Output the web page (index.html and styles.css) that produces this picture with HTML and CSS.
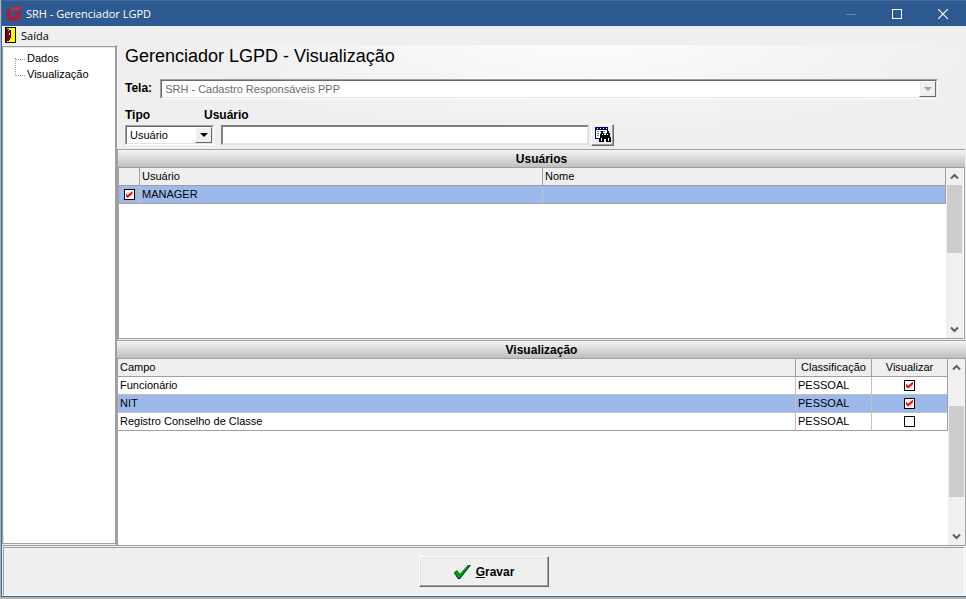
FILE: index.html
```
<!DOCTYPE html>
<html lang="pt-BR">
<head>
    <meta charset="UTF-8">
    <title>SRH - Gerenciador LGPD</title>
    <link rel="stylesheet" href="styles.css">
</head>
<body>
    <div class="window">
        <header class="titlebar">
            <svg class="logo" width="16" height="16" viewBox="0 0 16 16">
                <path d="M16 0 L13 4 H8 Q5 4 4 8 Q4 11 7 11 H10 L11 9 H7 L9 6 H16 L13 15 H5 Q0 15 0 9 Q1 1 8 1 Q13 1 16 0 Z" fill="#a3203f"/>
                <path d="M16 0 L13 4 H8 L3 5 Q5 1 8 1 Q13 1 16 0 Z" fill="#cc2b3a"/>
            </svg>
            <h1>SRH - Gerenciador LGPD</h1>
            <button class="win_btn" type="button" aria-label="Minimizar">
                <svg width="10" height="10"><path d="M0 5.500 H10" stroke="#6388b8"/></svg>
            </button>
            <button class="win_btn" type="button" aria-label="Maximizar">
                <svg width="10" height="10"><rect x="0.500" y="0.500" width="9" height="9" fill="none" stroke="#fff"/></svg>
            </button>
            <button class="win_btn" type="button" aria-label="Fechar">
                <svg width="10" height="10"><path d="M0 0 L10 10 M10 0 L0 10" stroke="#fff" stroke-width="1.200"/></svg>
            </button>
        </header>

        <nav class="menubar">
            <button class="menu_item" type="button">
                <svg width="11" height="16" viewBox="0 0 11 16" shape-rendering="crispEdges">
                    <rect width="11" height="16" fill="#000"/>
                    <rect x="1" y="1" width="9" height="14" fill="#ff0"/>
                    <path d="M1 1 H3 V2 H4 V3 H5 V11 H4 V13 H3 V14 H2 V15 H1 Z" fill="#800000"/>
                    <path d="M5 3 H6 V11 H5 V13 H4 V14 H3 V13 H4 V11 H5 Z" fill="#000"/>
                    <rect x="2" y="1" width="2" height="1" fill="#0ff"/>
                    <rect x="3" y="3" width="1" height="1" fill="#0ff"/>
                    <rect x="4" y="6" width="1" height="2" fill="#ff0"/>
                </svg>
                Saída
            </button>
        </nav>

        <div class="main">
            <aside class="sidebar">
                <ul class="tree">
                    <li><a href="#dados">Dados</a></li>
                    <li><a href="#visualizacao">Visualização</a></li>
                </ul>
            </aside>

            <main class="content">
                <form class="filter">
                    <h2>Gerenciador LGPD - Visualização</h2>
                    <div class="row">
                        <label class="label" for="tela">Tela:</label>
                        <div class="combo combo_tela">
                            <select id="tela" disabled>
                                <option>SRH - Cadastro Responsáveis PPP</option>
                            </select>
                            <span class="arrow"></span>
                        </div>
                    </div>
                    <div class="fields">
                        <label class="label" for="tipo">Tipo</label>
                        <label class="label label_usuario" for="usuario">Usuário</label>
                        <div class="combo">
                            <select id="tipo">
                                <option>Usuário</option>
                            </select>
                            <span class="arrow"></span>
                        </div>
                        <input class="text" id="usuario" type="text">
                        <button class="search" type="button" aria-label="Pesquisar">
                            <svg width="16" height="16" viewBox="0 0 16 16" shape-rendering="crispEdges">
                                <rect width="13" height="12" fill="#000080"/>
                                <rect x="1" y="3" width="11" height="8" fill="#fff"/>
                                <path d="M2 1.500 H12" stroke="#fff" stroke-dasharray="1 2"/>
                                <path d="M2 4.500 H11 M2 6.500 H11 M2 8.500 H11" stroke="#808080" stroke-dasharray="2 1"/>
                                <path d="M6 4 H8 V6 H9 V8 H11 V6 H12 V4 H14 V6 H15 V10 H16 V15 H11 V11 H9 V15 H4 V11 H5 V7 H6 Z" fill="#000"/>
                                <path d="M6 11 H7 V14 H6 Z M13 11 H14 V14 H13 Z M7 7 H8 V8 H7 Z M12 7 H13 V8 H12 Z" fill="#fff"/>
                            </svg>
                        </button>
                    </div>
                </form>

                <section class="panel panel_users">
                    <h3>Usuários</h3>
                    <div class="grid">
                        <div class="table_box">
                            <table>
                                <colgroup><col class="col_check"><col><col></colgroup>
                                <thead>
                                    <tr><th></th><th>Usuário</th><th>Nome</th></tr>
                                </thead>
                                <tbody>
                                    <tr class="selected">
                                        <td class="center"><input type="checkbox" aria-label="MANAGER" checked></td>
                                        <td>MANAGER</td>
                                        <td></td>
                                    </tr>
                                </tbody>
                            </table>
                        </div>
                        <div class="scroll">
                            <svg width="17" height="17" viewBox="0 0 17 17"><path d="M5 10.500 L8.500 7 L12 10.500" fill="none" stroke="#606060" stroke-width="2"/></svg>
                            <div class="track"><div class="thumb"></div></div>
                            <svg width="17" height="17" viewBox="0 0 17 17"><path d="M5 6.500 L8.500 10 L12 6.500" fill="none" stroke="#606060" stroke-width="2"/></svg>
                        </div>
                    </div>
                </section>

                <section class="panel panel_fields">
                    <h3>Visualização</h3>
                    <div class="grid">
                        <div class="table_box">
                            <table>
                                <colgroup><col><col class="col_data"><col class="col_data"></colgroup>
                                <thead>
                                    <tr><th>Campo</th><th class="center">Classificação</th><th class="center">Visualizar</th></tr>
                                </thead>
                                <tbody>
                                    <tr>
                                        <td>Funcionário</td>
                                        <td>PESSOAL</td>
                                        <td class="center"><input type="checkbox" aria-label="Visualizar Funcionário" checked></td>
                                    </tr>
                                    <tr class="selected">
                                        <td>NIT</td>
                                        <td>PESSOAL</td>
                                        <td class="center"><input type="checkbox" aria-label="Visualizar NIT" checked></td>
                                    </tr>
                                    <tr>
                                        <td>Registro Conselho de Classe</td>
                                        <td>PESSOAL</td>
                                        <td class="center"><input type="checkbox" aria-label="Visualizar Registro Conselho de Classe"></td>
                                    </tr>
                                </tbody>
                            </table>
                        </div>
                        <div class="scroll">
                            <svg width="17" height="17" viewBox="0 0 17 17"><path d="M5 10.500 L8.500 7 L12 10.500" fill="none" stroke="#606060" stroke-width="2"/></svg>
                            <div class="track"><div class="thumb"></div></div>
                            <svg width="17" height="17" viewBox="0 0 17 17"><path d="M5 6.500 L8.500 10 L12 6.500" fill="none" stroke="#606060" stroke-width="2"/></svg>
                        </div>
                    </div>
                </section>
            </main>
        </div>

        <footer class="footer">
            <button class="save" type="button">
                <svg width="17" height="16" viewBox="0 0 17 16">
                    <path d="M0 9 L3 7 L6 10 L14 1 L17 1 L6 15 L4 15 Z" fill="#000080"/>
                    <path d="M0 8 L3 6 L6 10 L14 1 L16 1 L6 14 L4 14 Z" fill="#00a000"/>
                </svg>
                <span><u>G</u>ravar</span>
            </button>
        </footer>
    </div>
</body>
</html>
```
FILE: styles.css
```
* {
    box-sizing: border-box;
    margin: 0;
    padding: 0;
    list-style: none;
}

body {
    height: 100vh;
    background-color: #b4b4b4;
    font-family: "Liberation Sans", Arial, sans-serif;
    font-size: 11px;
    color: #000;
}

button, input, select {
    font: inherit;
    color: inherit;
    border: none;
    border-radius: 0;
    appearance: none;
}

a {
    color: inherit;
    text-decoration: none;
}

svg {
    display: block;
    flex: none;
}

.window {
    display: flex;
    flex-direction: column;
    height: calc(100vh - 2px);
    margin-left: 1px;
    border-left: 1px solid #3c679f;
    border-bottom: 1px solid #3c679f;
    background-color: #efefef;
}

/* title bar */
.titlebar {
    display: flex;
    align-items: center;
    height: 26px;
    padding-left: 4px;
    background-color: #2e5a92;
    border-top: 1px solid #45699b;
    color: #fff;
}

.titlebar h1 {
    flex: 1;
    margin-left: 4px;
    font-family: "Open Sans", "Noto Sans", sans-serif;
    font-size: 11px;
    font-weight: normal;
    line-height: 14px;
}

.win_btn {
    display: flex;
    align-items: center;
    justify-content: center;
    width: 46px;
    height: 25px;
    background: none;
}

/* menu */
.menubar {
    height: 19px;
    padding-left: 3px;
}

.menu_item {
    display: flex;
    align-items: center;
    gap: 5px;
    height: 18px;
    background: none;
    font-family: "Open Sans", "Noto Sans", sans-serif;
    font-size: 11px;
}

.main {
    display: flex;
    flex: 1;
    min-height: 0;
    border-bottom: 1px solid #a0a0a0;
}

/* tree */
.sidebar {
    width: 114px;
    margin: 1px 0;
    padding-top: 3px;
    background-color: #fff;
    border: 1px solid #a0a0a0;
    box-shadow: inset 1px 1px #e3e3e3;
}

.tree {
    padding-left: 12px;
}

.tree li {
    display: flex;
    height: 16px;
    line-height: 16px;
}

.tree li::before {
    content: "";
    width: 9px;
    height: 9px;
    margin-right: 2px;
    border-left: 1px dotted #a0a0a0;
    border-bottom: 1px dotted #a0a0a0;
}

.tree li:first-child::before {
    border-left-color: transparent;
}

.tree li + li::before {
    height: 17px;
    margin-top: -8px;
}

.content {
    display: flex;
    flex: 1;
    flex-direction: column;
    min-width: 0;
    border-left: 1px solid #a0a0a0;
}

/* filter */
.filter {
    height: 104px;
    padding: 0 28px 0 8px;
    background: radial-gradient(ellipse at 55% 0, #fcfcfc, #efefef 60%);
}

.filter h2 {
    height: 34px;
    line-height: 22px;
    font-size: 18px;
    font-weight: normal;
}

.row {
    display: flex;
    gap: 8px;
    height: 27px;
}

.label {
    font-size: 12px;
    font-weight: bold;
    line-height: 18px;
}

.combo {
    display: grid;
    height: 20px;
    background-color: #fff;
    border: 1px solid #a0a0a0;
    border-right-color: #fff;
    border-bottom-color: #fff;
}

.combo_tela {
    flex: 1;
}

.combo select {
    grid-area: 1 / 1;
    width: 100%;
    padding: 0 16px 0 3px;
    background-color: #fff;
    border: 1px solid #696969;
    border-right-color: #e3e3e3;
    border-bottom-color: #e3e3e3;
}

.combo select:disabled {
    color: #6d6d6d;
    opacity: 1;
}

.arrow {
    grid-area: 1 / 1;
    justify-self: end;
    display: flex;
    align-items: center;
    justify-content: center;
    width: 17px;
    margin: 1px;
    background-color: #efefef;
    border: 1px solid #fff;
    border-right-color: #696969;
    border-bottom-color: #696969;
    pointer-events: none;
}

.arrow::after {
    content: "";
    border: 4px solid transparent;
    border-top-color: #000;
    border-bottom: none;
}

select:disabled + .arrow::after {
    border-top-color: #a0a0a0;
}

.fields {
    display: grid;
    grid-template-columns: 89px minmax(0, 368px) 23px;
    column-gap: 7px;
    align-items: center;
}

.label_usuario {
    grid-column: 2 / 4;
    margin-left: -17px;
}

.text {
    width: 100%;
    height: 20px;
    padding: 0 3px;
    background-color: #fff;
    border: 2px solid;
    border-color: #808080 #e3e3e3 #e3e3e3 #808080;
}

.search {
    display: flex;
    align-items: center;
    justify-content: center;
    width: 23px;
    height: 22px;
    margin-left: -5px;
    background-color: #efefef;
    border: 1px solid #fff;
    border-right-color: #696969;
    border-bottom-color: #696969;
    box-shadow: inset -1px -1px #a0a0a0;
}

/* panels */
.panel {
    display: flex;
    flex-direction: column;
    min-height: 0;
}

.panel_users {
    flex: 190 0 0;
    padding: 0 1px 1px 0;
    border-left: 1px solid #a0a0a0;
}

.panel_fields {
    flex: 206 0 0;
}

.panel h3 {
    height: 19px;
    border-top: 1px solid #a0a0a0;
    border-bottom: 1px solid #a0a0a0;
    background: linear-gradient(#f4f4f4, #bfbfbf);
    font-size: 12px;
    line-height: 18px;
    text-align: center;
}

.grid {
    display: flex;
    flex: 1;
    min-height: 0;
    background-color: #fff;
    border-right: 1px solid #a0a0a0;
}

.panel_users .grid {
    padding-right: 1px;
    border-left: 1px solid #a0a0a0;
    border-bottom: 1px solid #a0a0a0;
}

.panel_fields .grid {
    border-left: 1px solid #a0a0a0;
}

.table_box {
    flex: 1;
    min-width: 0;
}

table {
    width: 100%;
    table-layout: fixed;
    border-collapse: separate;
    border-spacing: 0;
}

th, td {
    height: 18px;
    padding: 0 2px;
    border-right: 1px solid #c0c0c0;
    border-bottom: 1px solid #c0c0c0;
    font-weight: normal;
    line-height: 17px;
    text-align: left;
    white-space: nowrap;
}

th {
    background-color: #efefef;
    border-color: #a0a0a0;
}

th:last-child, td:last-child {
    border-right-color: #a0a0a0;
}

tbody tr:last-child td {
    border-bottom-color: #a0a0a0;
}

.selected {
    background-color: #9db9eb;
}

.center {
    text-align: center;
}

.col_check {
    width: 21px;
}

.col_data {
    width: 76px;
}

input[type="checkbox"] {
    display: block;
    width: 11px;
    height: 11px;
    margin: 0 auto;
    background-color: #fff;
    border: 1px solid #000;
}

input[type="checkbox"]:checked::before {
    content: "";
    display: block;
    width: 7px;
    height: 7px;
    margin: 1px;
    background-color: #f00;
    clip-path: polygon(0 30%, 30% 60%, 100% 0, 100% 40%, 30% 100%, 0 70%);
}

.scroll {
    display: flex;
    flex-direction: column;
    width: 17px;
    background-color: #f0f0f0;
}

.track {
    flex: 1;
}

.thumb {
    width: 15px;
    height: 50%;
    margin: 0 auto;
    background-color: #cdcdcd;
}

.panel_fields .track {
    display: grid;
    grid-template-rows: 20% 60%;
}

.panel_fields .thumb {
    grid-row: 2;
    height: 100%;
}

/* footer */
.footer {
    display: flex;
    align-items: center;
    justify-content: center;
    height: 49px;
    margin: 1px 1px 0;
    border: 1px solid #a0a0a0;
    border-right-color: #fff;
    border-bottom-color: #fff;
}

.save {
    display: flex;
    align-items: center;
    justify-content: center;
    gap: 5px;
    width: 130px;
    height: 31px;
    background-color: #efefef;
    border: 1px solid #fff;
    border-right-color: #696969;
    border-bottom-color: #696969;
    box-shadow: inset -1px -1px #a0a0a0, inset 1px 1px #e3e3e3;
    font-size: 12px;
    font-weight: bold;
}
```
